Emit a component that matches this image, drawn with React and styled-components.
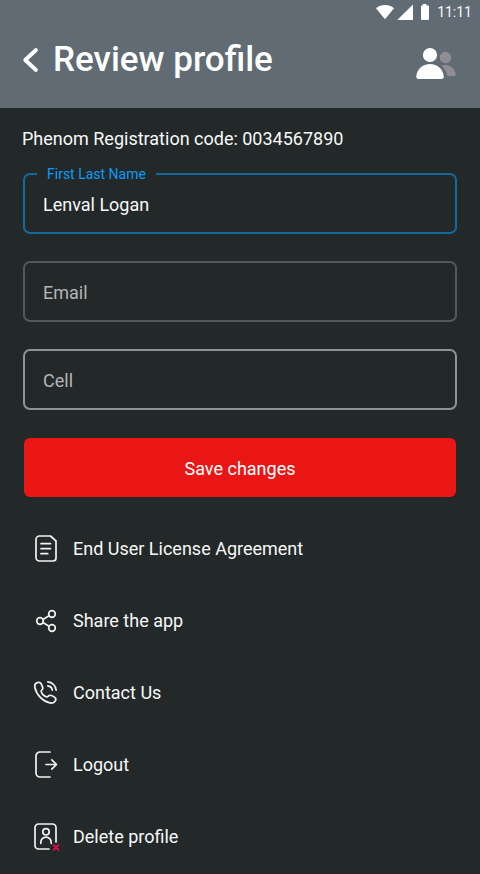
import React from "react";
import styled, { createGlobalStyle } from "styled-components";

const GlobalStyle = createGlobalStyle`
  *, *::before, *::after { box-sizing: border-box; }
  body {
    margin: 0;
    background: #232829;
    color: #f8f8f8;
    font-family: Roboto, sans-serif;
    font-size: 18px;
    line-height: 24px;
  }
`;

const Header = styled.header`
  background: #616b74;
  padding-bottom: 12px;
`;

const StatusBar = styled.div`
  display: flex;
  align-items: center;
  justify-content: flex-end;
  height: 24px;
  padding-right: 8px;
  gap: 8px;
  font-size: 14px;
`;

const StatusIcons = styled.svg`
  width: 53px;
  height: 24px;
`;

const TitleRow = styled.div`
  display: flex;
  align-items: center;
  height: 72px;
  padding: 0 24px 0 20px;
`;

const IconButton = styled.button`
  display: flex;
  padding: 0;
  border: 0;
  background: none;
  color: inherit;
  cursor: pointer;
`;

const Title = styled.h1`
  flex: 1;
  margin: 0 0 0 10px;
  color: #fff;
  font-size: 35px;
  line-height: 48px;
  font-weight: 500;
`;

const Main = styled.main`
  padding: 19px 23px 0;
`;

const Code = styled.p`
  margin: 0 0 22px -1px;
`;

const Form = styled.form`
  display: flex;
  flex-direction: column;
  gap: 27px;
`;

const tones = {
  active: "#13699e",
  muted: "#54585a",
  bright: "#909394",
};

const Field = styled.div`
  position: relative;
  display: flex;
  height: 61px;
  border: 2px solid ${(p) => tones[p.$tone]};
  border-radius: 7px;
`;

const FieldLabel = styled.label`
  position: absolute;
  top: -13px;
  left: 12px;
  padding: 0 10px;
  background: #232829;
  color: #0d9bf5;
  font-size: 14px;
`;

const Input = styled.input`
  flex: 1;
  min-width: 0;
  padding: 2px 18px 0;
  border: 0;
  outline: 0;
  background: none;
  color: inherit;
  font: inherit;

  &::placeholder {
    color: #b3b5b6;
    opacity: 1;
  }
`;

const SaveButton = styled.button`
  height: 59px;
  margin: 1px 1px 0;
  padding: 2px 0 0;
  border: 0;
  border-radius: 6px;
  background: #e91615;
  color: #fff;
  font: inherit;
  cursor: pointer;
`;

const Menu = styled.nav`
  display: flex;
  flex-direction: column;
  padding: 16px 0 0 7px;
`;

const MenuLink = styled.a`
  display: flex;
  align-items: center;
  gap: 11px;
  height: 72px;
  color: inherit;
  text-decoration: none;
`;

const Glyph = styled.svg`
  width: 32px;
  height: 32px;
  fill: none;
  stroke: #f2f2f2;
  stroke-width: 1.7;
  stroke-linecap: round;
  stroke-linejoin: round;
`;

const items = [
  {
    label: "End User License Agreement",
    icon: (
      <>
        <path d="M9.5 3H20.5L26 8V25a3 3 0 0 1-3 3H9.5a3.5 3.5 0 0 1-3.5-3.5V6.5A3.5 3.5 0 0 1 9.5 3Z" />
        <path d="M11 10.7H20.5M11 15.7H20.5M11 20.7H17.7" />
      </>
    ),
  },
  {
    label: "Share the app",
    icon: (
      <>
        <circle cx="10" cy="16" r="3.3" />
        <circle cx="22" cy="9" r="3.3" />
        <circle cx="22" cy="23" r="3.3" />
        <path d="M12.9 14.4 19.1 10.7M12.9 17.6 19.1 21.3" />
      </>
    ),
  },
  {
    label: "Contact Us",
    icon: (
      <>
        <path d="M6 6.2C8 4.9 10.2 5.2 11 6.7C12 8.5 13.1 10.1 12.8 11.5C12.5 12.8 10.9 13.1 11.2 14.5C11.8 16.6 14.4 19.2 16.5 19.9C18 20.3 18.4 18.5 19.8 18.3C21.3 18 23.2 19.2 24.5 20.1C25.9 21 26 22.8 25.2 24.2C24.2 25.9 22.1 26.3 20 25.9C13.2 24.5 6.6 18 5 11C4.5 8.9 4.8 7 6 6.2Z" />
        <path d="M17.8 4.9C22.3 5.2 25.8 8.8 26.1 13.2M17.8 8.8C20.2 9.1 22 10.9 22.3 13.2" />
      </>
    ),
  },
  {
    label: "Logout",
    icon: (
      <>
        <path d="M20 3H10a4 4 0 0 0-4 4V24a4 4 0 0 0 4 4H20" />
        <path d="M16 15.5H26.3M21.8 10.8 26.5 15.5 21.8 20.2" />
      </>
    ),
  },
  {
    label: "Delete profile",
    icon: (
      <>
        <path d="M19 28H8.5A3.5 3.5 0 0 1 5 24.5V6.5A3.5 3.5 0 0 1 8.5 3H22.5A3.5 3.5 0 0 1 26 6.5V21" />
        <circle cx="16" cy="10.8" r="3.2" />
        <path d="M10.8 22.3V21.4a5.2 5.2 0 0 1 10.4 0V22.3" />
        <path d="M23.6 24.1 28.4 28.9M28.4 24.1 23.6 28.9" stroke="#f5054f" />
      </>
    ),
  },
];

export default function App() {
  return (
    <>
      <GlobalStyle />
      <Header>
        <StatusBar>
          <StatusIcons viewBox="0 0 53 24" fill="#fff" aria-hidden="true">
            <path d="M0 8.2C5.2 3.9 12.8 3.9 18 8.2L9 19.2Z" />
            <path d="M37 4.5V20H21.2Z" />
            <path d="M46.6 4H50.4V5.4H52Q53 5.4 53 6.4V19Q53 20 52 20H46Q45 20 45 19V6.4Q45 5.4 46 5.4H46.6Z" />
          </StatusIcons>
          <span>11:11</span>
        </StatusBar>
        <TitleRow>
          <IconButton type="button" aria-label="Back">
            <svg width="23" height="32" viewBox="0 0 23 32" fill="none" stroke="#fff" strokeWidth="3.8" strokeLinecap="round" strokeLinejoin="round">
              <path d="M16 6 5.2 16 16 26" />
            </svg>
          </IconButton>
          <Title>Review profile</Title>
          <IconButton type="button" aria-label="Profiles">
            <svg width="40" height="40" viewBox="0 0 40 40">
              <g fill="#8f8e92">
                <circle cx="29.5" cy="17.5" r="5.7" />
                <path d="M25.5 25.4C33 23.6 38.4 27.5 39.8 34Q40 36 38 36H31.2C30.5 31.5 28.8 28.2 25.5 25.4Z" />
              </g>
              <g fill="#fff">
                <circle cx="14" cy="15" r="7.1" />
                <path d="M2.6 39C1 39 .1 38.1.2 36.5C1 29.2 6.5 24 14 24S27 29.2 27.8 36.5C27.9 38.1 27 39 25.4 39Z" />
              </g>
            </svg>
          </IconButton>
        </TitleRow>
      </Header>
      <Main>
        <Code>Phenom Registration code: 0034567890</Code>
        <Form onSubmit={(e) => e.preventDefault()}>
          <Field $tone="active">
            <FieldLabel htmlFor="name">First Last Name</FieldLabel>
            <Input id="name" type="text" defaultValue="Lenval Logan" />
          </Field>
          <Field $tone="muted">
            <Input type="email" placeholder="Email" aria-label="Email" />
          </Field>
          <Field $tone="bright">
            <Input type="tel" placeholder="Cell" aria-label="Cell" />
          </Field>
          <SaveButton type="submit">Save changes</SaveButton>
        </Form>
        <Menu>
          {items.map(({ label, icon }) => (
            <MenuLink key={label} href="#">
              <Glyph viewBox="0 0 32 32" aria-hidden="true">{icon}</Glyph>
              {label}
            </MenuLink>
          ))}
        </Menu>
      </Main>
    </>
  );
}
